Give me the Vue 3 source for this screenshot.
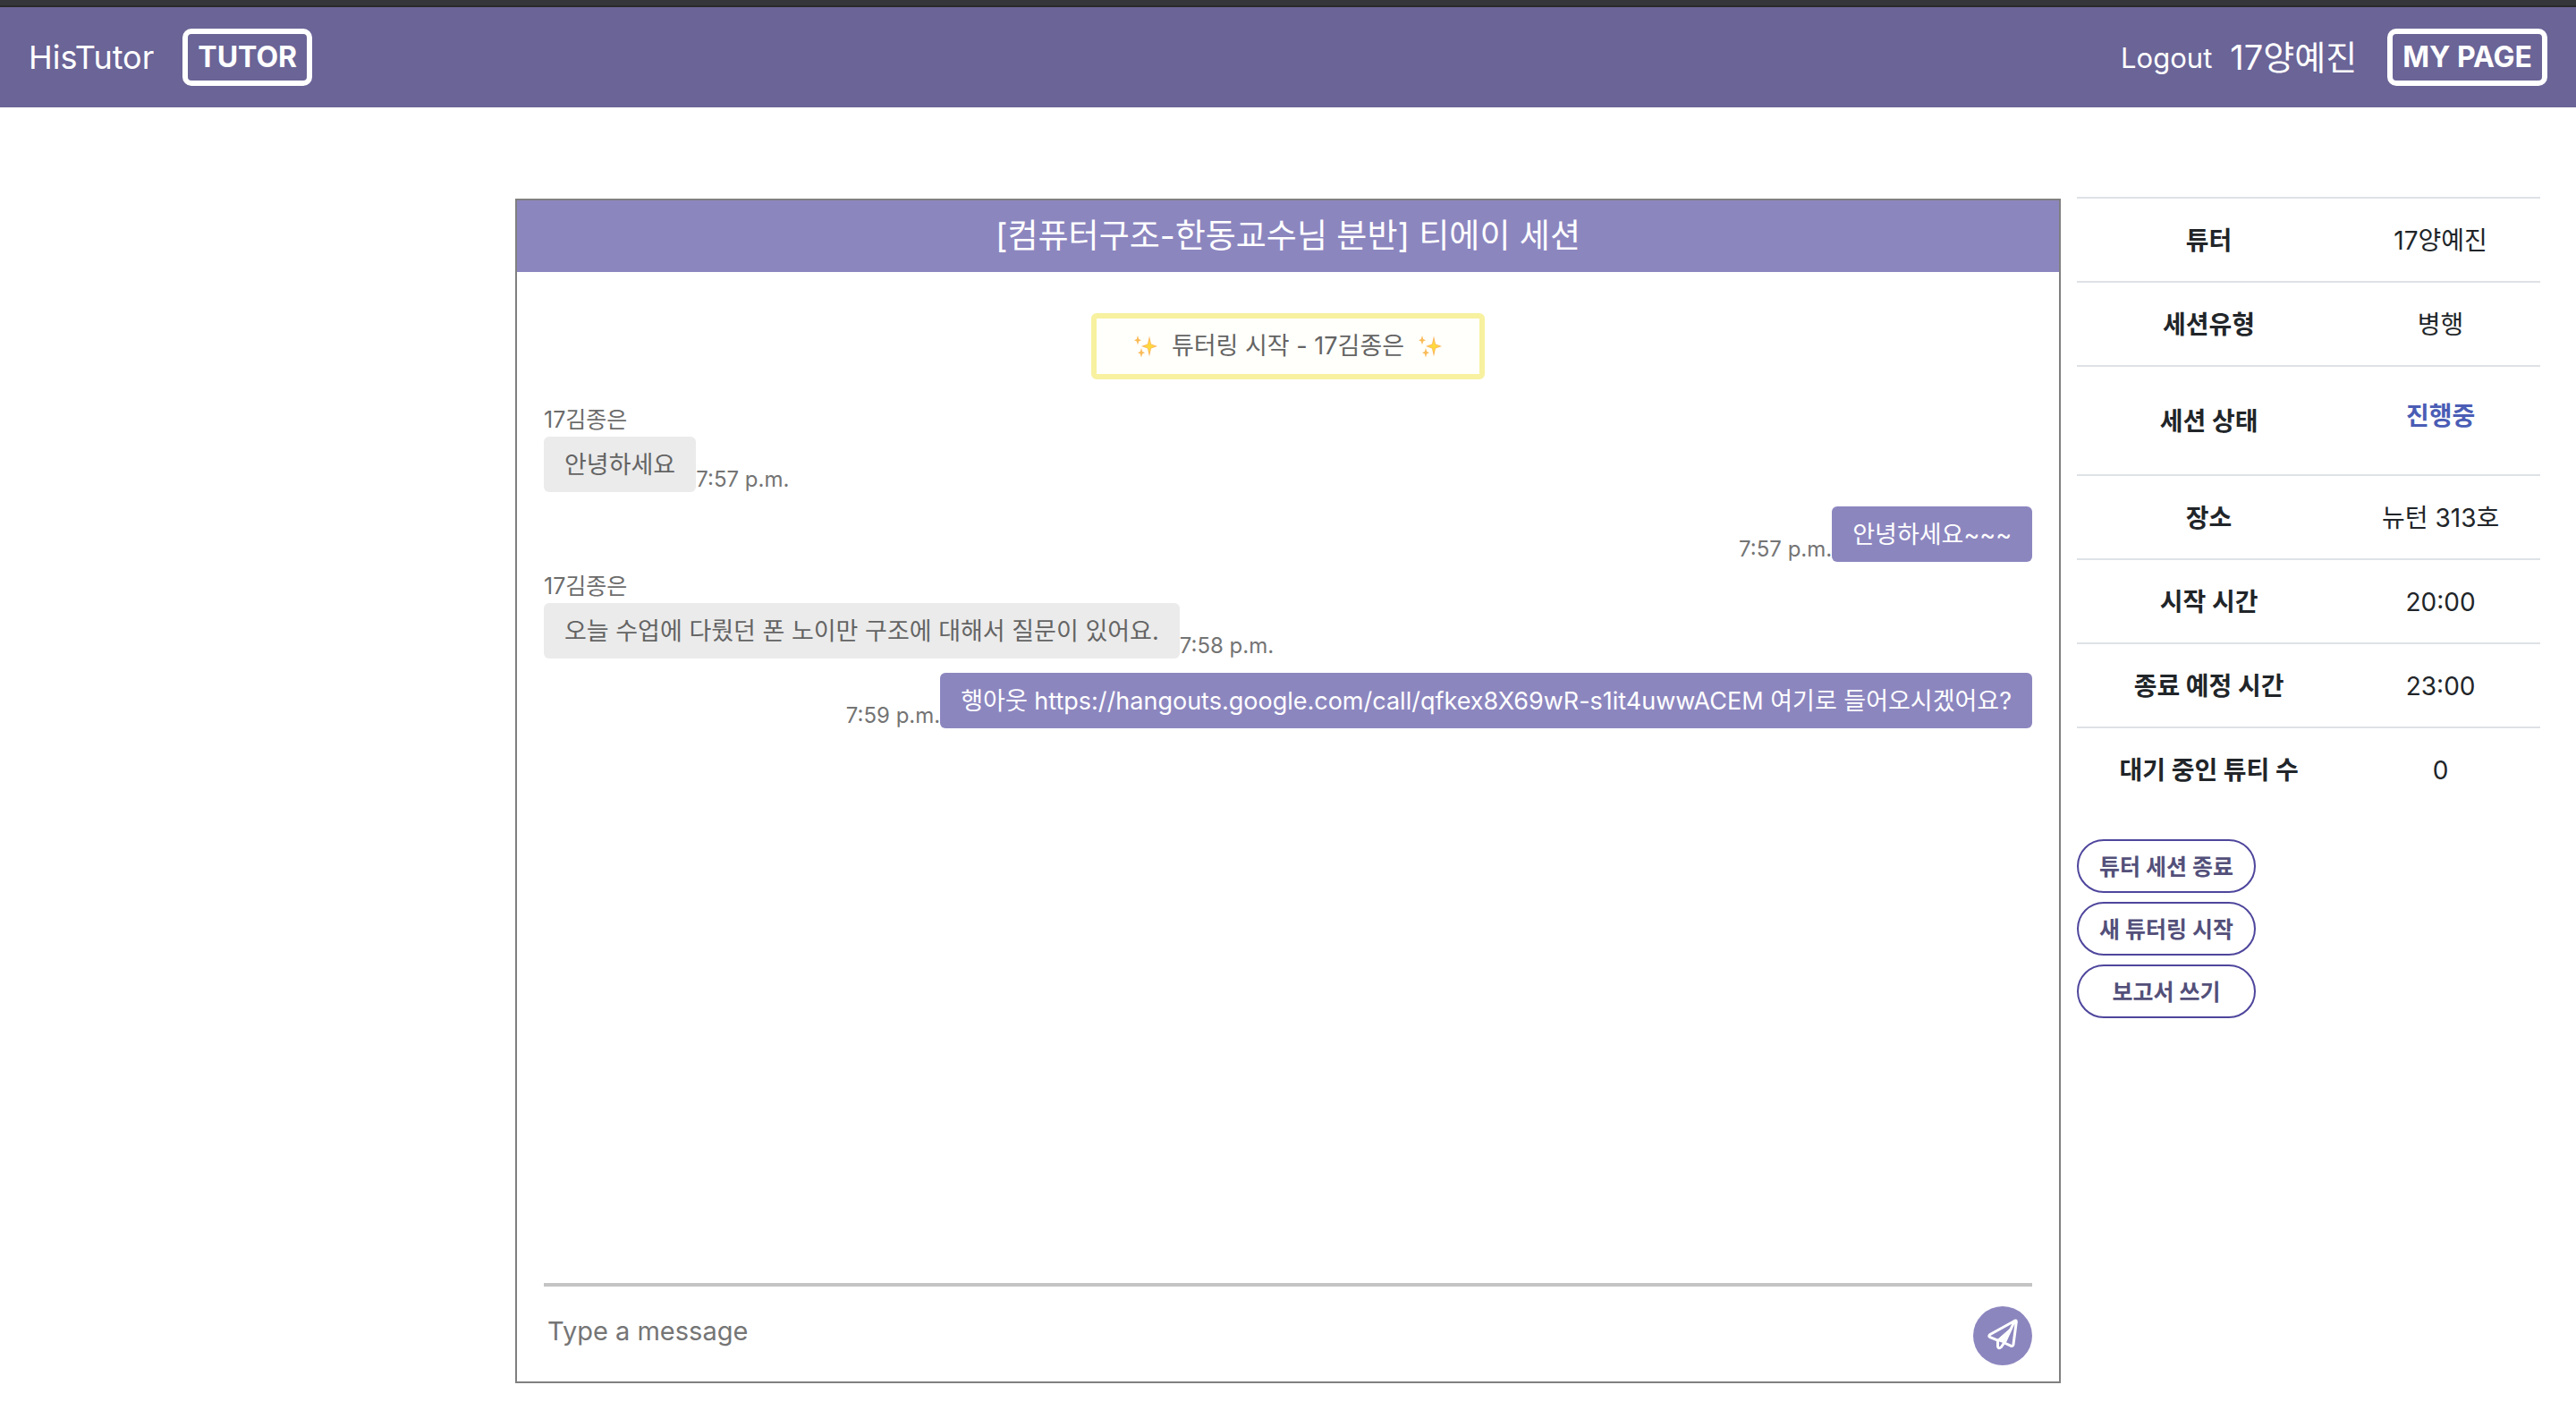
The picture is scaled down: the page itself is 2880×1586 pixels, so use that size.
<script setup>
import { ref } from 'vue'

const draft = ref('')

const messages = [
  { id: 1, mine: false, author: '17김종은', text: '안녕하세요', time: '7:57 p.m.' },
  { id: 2, mine: true, text: '안녕하세요~~~', time: '7:57 p.m.' },
  { id: 3, mine: false, author: '17김종은', text: '오늘 수업에 다뤘던 폰 노이만 구조에 대해서 질문이 있어요.', time: '7:58 p.m.' },
  { id: 4, mine: true, text: '행아웃 https://hangouts.google.com/call/qfkex8X69wR-s1it4uwwACEM 여기로 들어오시겠어요?', time: '7:59 p.m.' },
]

const details = [
  { label: '튜터', value: '17양예진' },
  { label: '세션유형', value: '병행' },
  { label: '세션 상태', value: '진행중', status: true },
  { label: '장소', value: '뉴턴 313호' },
  { label: '시작 시간', value: '20:00' },
  { label: '종료 예정 시간', value: '23:00' },
  { label: '대기 중인 튜티 수', value: '0' },
]

const actions = ['튜터 세션 종료', '새 튜터링 시작', '보고서 쓰기']
</script>

<template>
  <div class="page">
    <header class="navbar">
      <nav class="group">
        <a href="#" class="brand">HisTutor</a>
        <a href="#" class="badge">TUTOR</a>
      </nav>
      <nav class="group">
        <a href="#" class="logout">Logout</a>
        <a href="#" class="user">17양예진</a>
        <a href="#" class="badge">MY PAGE</a>
      </nav>
    </header>

    <main class="content">
      <section class="chat">
        <h1 class="chat-title">[컴퓨터구조-한동교수님 분반] 티에이 세션</h1>
        <div class="chat-body">
          <div class="notice">
            <svg class="sparkle" viewBox="0 0 26 26" aria-hidden="true">
              <path fill="#fbb75c" d="M17 1.500L19 10.500L26 13L19 15.500L17 24.500L15 15.500L8 13L15 10.500z" />
              <path fill="#ffd83e" d="M17 6L18.500 11L23 13L18.500 15L17 20L15.500 15L11 13L15.500 11z" />
              <path fill="#fabb58" d="M4 1L5.200 5L8 6.200L5.200 7.400L4 11.500L2.800 7.400L0 6.200L2.800 5zM8 15L9.200 19L12 20.200L9.200 21.400L8 25.500L6.800 21.400L4 20.200L6.800 19z" />
            </svg>
            <span>튜터링 시작 - 17김종은</span>
            <svg class="sparkle" viewBox="0 0 26 26" aria-hidden="true">
              <path fill="#fbb75c" d="M17 1.500L19 10.500L26 13L19 15.500L17 24.500L15 15.500L8 13L15 10.500z" />
              <path fill="#ffd83e" d="M17 6L18.500 11L23 13L18.500 15L17 20L15.500 15L11 13L15.500 11z" />
              <path fill="#fabb58" d="M4 1L5.200 5L8 6.200L5.200 7.400L4 11.500L2.800 7.400L0 6.200L2.800 5zM8 15L9.200 19L12 20.200L9.200 21.400L8 25.500L6.800 21.400L4 20.200L6.800 19z" />
            </svg>
          </div>

          <div v-for="m in messages" :key="m.id" class="message" :class="{ mine: m.mine }">
            <div v-if="m.author" class="author">{{ m.author }}</div>
            <div class="row">
              <div class="bubble">{{ m.text }}</div>
              <time class="time">{{ m.time }}</time>
            </div>
          </div>
        </div>

        <form class="composer" @submit.prevent="draft = ''">
          <input v-model="draft" type="text" class="field" placeholder="Type a message" aria-label="Type a message" />
          <button type="submit" class="send" aria-label="Send">
            <svg viewBox="0 0 66 66" fill="none" stroke="#fff" stroke-width="3" stroke-linejoin="round" stroke-linecap="round" aria-hidden="true">
              <path d="M46.500 16.200L19 31.500Q16.500 33.300 19 34.700L27 37.800M35 41L42 44.200Q44.600 45 45 42.500L48.300 17.500Q48.300 15.300 46.500 16.200z" />
              <path d="M27.500 38.500V45Q28.500 48.300 31.500 45.500L34.500 41" />
              <path fill="#fff" stroke-width="1" d="M41.500 25L26.500 38L33.500 40.500z" />
            </svg>
          </button>
        </form>
      </section>

      <aside class="side">
        <table class="details">
          <tbody>
            <tr v-for="d in details" :key="d.label" :class="{ tall: d.status }">
              <th scope="row">{{ d.label }}</th>
              <td>
                <p v-if="d.status" class="status">{{ d.value }}</p>
                <template v-else>{{ d.value }}</template>
              </td>
            </tr>
          </tbody>
        </table>
        <div class="actions">
          <button v-for="a in actions" :key="a" type="button" class="action">{{ a }}</button>
        </div>
      </aside>
    </main>
  </div>
</template>

<style>
body {
  margin: 0;
  background: #fff;
}
</style>

<style scoped>
.page {
  box-sizing: border-box;
  min-height: 100vh;
  display: flex;
  flex-direction: column;
  border-top: 6px solid #35363a;
  font-family: Inter, "Noto Sans CJK KR", sans-serif;
  font-size: 28px;
  color: #212529;
}

.navbar {
  display: flex;
  justify-content: space-between;
  align-items: center;
  padding: 24px 32px;
  border-top: 2px solid #2a2a2b;
  background: #6a6497;
}

.group {
  display: flex;
  align-items: center;
}

.group a {
  color: #fff;
  text-decoration: none;
  white-space: nowrap;
}

.brand {
  margin-right: 32px;
  font-size: 36px;
}

.logout {
  margin-right: 20px;
  font-size: 31px;
}

.user {
  margin-right: 34px;
  font-size: 38px;
  line-height: 40px;
}

.badge {
  padding: 0 11px;
  border: 6px solid #fff;
  border-radius: 10px;
  font-size: 32px;
  font-weight: 700;
  line-height: 52px;
}

.content {
  flex: 1;
  display: flex;
  padding: 102px 0 40px 20%;
}

.chat {
  box-sizing: border-box;
  flex: 0 0 75%;
  display: flex;
  flex-direction: column;
  border: 2px solid #808080;
}

.chat-title {
  margin: 0;
  background: #8c86bf;
  color: #fff;
  font-size: 37px;
  font-weight: 400;
  line-height: 80px;
  text-align: center;
}

.chat-body {
  flex: 1;
  display: flex;
  flex-direction: column;
  gap: 16px;
  padding: 46px 30px;
  font-size: 27px;
  color: #646464;
}

.notice {
  display: flex;
  align-items: center;
  align-self: center;
  gap: 16px;
  margin-bottom: 18px;
  padding: 0 42px;
  border: 6px solid #f7f1a0;
  border-radius: 6px;
  background: #fffffb;
  line-height: 62px;
}

.sparkle {
  width: 26px;
  height: 26px;
}

.author {
  margin-bottom: 8px;
  font-size: 25px;
  line-height: 22px;
  color: #6c6c6c;
}

.row {
  display: flex;
  align-items: flex-end;
}

.mine .row {
  flex-direction: row-reverse;
}

.bubble {
  padding: 2px 23px 0;
  border-radius: 6px;
  background: #ebebeb;
  line-height: 60px;
}

.mine .bubble {
  background: #8c86bf;
  color: #fff;
}

.time {
  font-size: 24px;
  line-height: 28px;
  color: #747474;
}

.composer {
  display: flex;
  align-items: flex-start;
  margin: 0 30px;
  padding-bottom: 18px;
  border-top: 4px solid #c4c4c4;
}

.field {
  flex: 1;
  min-width: 0;
  height: 60px;
  margin-top: 19px;
  padding: 0 4px;
  border: 0;
  outline: 0;
  background: transparent;
  font: inherit;
  font-size: 29px;
}

.field::placeholder {
  color: #757575;
  opacity: 1;
}

.send {
  width: 66px;
  height: 66px;
  margin-top: 22px;
  padding: 0;
  border: 0;
  border-radius: 50%;
  background: #8c86bf;
}

.send svg {
  display: block;
}

.side {
  flex: 1;
  margin-top: -2px;
  padding: 0 40px 0 18px;
}

.details {
  width: 100%;
  border-collapse: collapse;
  table-layout: fixed;
}

.details th,
.details td {
  height: 90px;
  padding: 2px 0 0;
  border-top: 2px solid #dee2e6;
  line-height: 44px;
  text-align: center;
  vertical-align: middle;
}

.details th {
  width: 57%;
}

.details .tall th,
.details .tall td {
  height: 118px;
}

.status {
  margin: 0 0 12px;
  font-weight: 700;
  color: #4a5db5;
}

.actions {
  display: flex;
  flex-direction: column;
  gap: 10px;
  margin-top: 32px;
}

.action {
  width: 200px;
  height: 60px;
  padding: 0 0 2px;
  border: 2px solid #4e469c;
  border-radius: 30px;
  background: #fff;
  font: inherit;
  font-size: 25px;
  font-weight: 700;
  color: #53507a;
}
</style>
